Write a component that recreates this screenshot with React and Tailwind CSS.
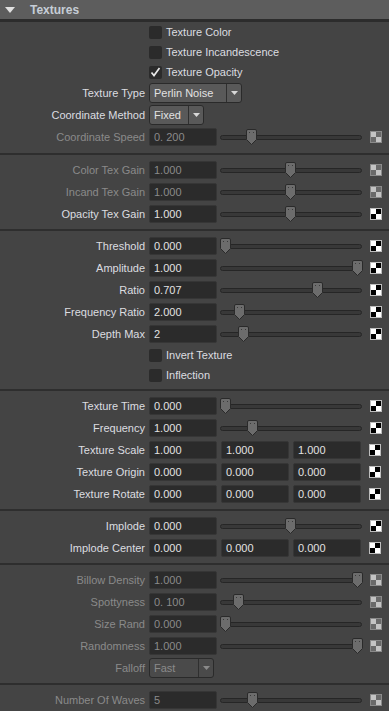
import React from 'react';

const font = { fontFamily: '"Liberation Sans", Arial, sans-serif' };

const groups = [
  [
    { type: 'check', label: 'Texture Color' },
    { type: 'check', label: 'Texture Incandescence' },
    { type: 'check', label: 'Texture Opacity', checked: true },
    { type: 'select', label: 'Texture Type', value: 'Perlin Noise', width: 'w-[93px]' },
    { type: 'select', label: 'Coordinate Method', value: 'Fixed', width: 'w-[55px]' },
    { type: 'slider', label: 'Coordinate Speed', value: '0. 200', pos: 251, disabled: true },
  ],
  [
    { type: 'slider', label: 'Color Tex Gain', value: '1.000', pos: 290, disabled: true },
    { type: 'slider', label: 'Incand Tex Gain', value: '1.000', pos: 290, disabled: true },
    { type: 'slider', label: 'Opacity Tex Gain', value: '1.000', pos: 290 },
  ],
  [
    { type: 'slider', label: 'Threshold', value: '0.000', pos: 225 },
    { type: 'slider', label: 'Amplitude', value: '1.000', pos: 357 },
    { type: 'slider', label: 'Ratio', value: '0.707', pos: 317 },
    { type: 'slider', label: 'Frequency Ratio', value: '2.000', pos: 239 },
    { type: 'slider', label: 'Depth Max', value: '2', pos: 243 },
    { type: 'check', label: 'Invert Texture' },
    { type: 'check', label: 'Inflection' },
  ],
  [
    { type: 'slider', label: 'Texture Time', value: '0.000', pos: 225 },
    { type: 'slider', label: 'Frequency', value: '1.000', pos: 252 },
    { type: 'triple', label: 'Texture Scale', values: ['1.000', '1.000', '1.000'] },
    { type: 'triple', label: 'Texture Origin', values: ['0.000', '0.000', '0.000'] },
    { type: 'triple', label: 'Texture Rotate', values: ['0.000', '0.000', '0.000'] },
  ],
  [
    { type: 'slider', label: 'Implode', value: '0.000', pos: 290 },
    { type: 'triple', label: 'Implode Center', values: ['0.000', '0.000', '0.000'] },
  ],
  [
    { type: 'slider', label: 'Billow Density', value: '1.000', pos: 357, disabled: true },
    { type: 'slider', label: 'Spottyness', value: '0. 100', pos: 238, disabled: true },
    { type: 'slider', label: 'Size Rand', value: '0.000', pos: 225, disabled: true },
    { type: 'slider', label: 'Randomness', value: '1.000', pos: 357, disabled: true },
    { type: 'select', label: 'Falloff', value: 'Fast', width: 'w-[65px]', disabled: true },
  ],
  [{ type: 'slider', label: 'Number Of Waves', value: '5', pos: 252, disabled: true }],
];

function Checker({ disabled }) {
  const light = disabled ? '#c4c4c4' : '#ffffff';
  const dark = disabled ? '#6a6a6a' : '#000000';
  return (
    <svg width="12" height="12" viewBox="0 0 12 12" className="ml-[8px] shrink-0">
      <rect x="0.5" y="0.5" width="11" height="11" fill={light} stroke={disabled ? '#8a8a8a' : '#bdbdbd'} />
      <rect x="6" y="1" width="5" height="5" fill={dark} />
      <rect x="1" y="6" width="5" height="5" fill={dark} />
    </svg>
  );
}

function Field({ value, disabled }) {
  return (
    <div
      className={`flex h-[18px] w-[68px] shrink-0 items-center rounded-[2px] border border-[#363636] bg-[#2b2b2b] pl-[4px] text-[11px] ${
        disabled ? 'text-[#8a8a8a]' : 'text-[#e2e2e2]'
      }`}
    >
      {value}
    </div>
  );
}

function Slider({ pos }) {
  return (
    <div className="relative ml-[3px] flex h-[18px] w-[142px] items-center">
      <div className="h-[5px] w-full rounded-full border border-[#262626] bg-[#383838]" />
      <svg
        width="11"
        height="16"
        viewBox="0 0 11 16"
        className="absolute top-[1px]"
        style={{ left: pos - 220 - 5 }}
      >
        <path d="M0.5 2 Q0.5 0.5 2 0.5 H9 Q10.5 0.5 10.5 2 V10.5 L5.5 15.5 L0.5 10.5 Z" fill="#6c6c6c" stroke="#2a2a2a" />
        <rect x="3" y="3" width="1" height="1" fill="#3a3a3a" />
        <rect x="7" y="3" width="1" height="1" fill="#3a3a3a" />
      </svg>
    </div>
  );
}

function Select({ value, width, disabled }) {
  return (
    <div
      className={`flex h-[20px] ${width} items-center rounded-[3px] border border-[#2a2a2a] ${
        disabled ? 'bg-[#4a4a4a] text-[#8a8a8a]' : 'bg-[#595959] text-[#e2e2e2]'
      } text-[11px]`}
    >
      <span className="flex-1 pl-[4px]">{value}</span>
      <span className="flex h-full w-[15px] items-center justify-center border-l border-[#2f2f2f]">
        <svg width="7" height="4" viewBox="0 0 7 4">
          <path d="M0 0 H7 L3.5 4 Z" fill={disabled ? '#8a8a8a' : '#d8d8d8'} />
        </svg>
      </span>
    </div>
  );
}

function Row({ row }) {
  if (row.type === 'check') {
    return (
      <div className="flex h-[20px] items-center pl-[149px]">
        <div className="flex h-[13px] w-[13px] items-center justify-center rounded-[2px] bg-[#2b2b2b]">
          {row.checked && (
            <svg width="11" height="10" viewBox="0 0 11 10">
              <path d="M1.5 5.5 L4 8.5 L9.5 1" fill="none" stroke="#e8e8e8" strokeWidth="1.7" />
            </svg>
          )}
        </div>
        <span className="ml-[4px] text-[11px] text-[#dcdde0]">{row.label}</span>
      </div>
    );
  }

  return (
    <div className="flex h-[22px] items-center">
      <div
        className={`w-[149px] shrink-0 pr-[4px] text-right text-[11px] ${
          row.disabled ? 'text-[#8a8a8a]' : 'text-[#dcdde0]'
        }`}
      >
        {row.label}
      </div>
      {row.type === 'select' && <Select value={row.value} width={row.width} disabled={row.disabled} />}
      {row.type === 'slider' && (
        <>
          <Field value={row.value} disabled={row.disabled} />
          <Slider pos={row.pos} />
          <Checker disabled={row.disabled} />
        </>
      )}
      {row.type === 'triple' && (
        <>
          <div className="flex gap-[4px]">
            {row.values.map((v, i) => (
              <Field key={i} value={v} />
            ))}
          </div>
          <Checker />
        </>
      )}
    </div>
  );
}

export default function App() {
  return (
    <div className="h-[711px] w-[389px] overflow-hidden bg-[#444444]" style={font}>
      <div className="flex h-[19px] items-center bg-[#5d5d5d]">
        <svg width="10" height="6" viewBox="0 0 10 6" className="ml-[5px]">
          <path d="M0 0 H10 L5 6 Z" fill="#e0e0e0" />
        </svg>
        <span className="ml-[15px] text-[12px] font-bold text-[#c6cdd6]">Textures</span>
      </div>
      <div className="h-[3px] bg-[#2c2c2c]" />
      {groups.map((rows, gi) => (
        <div key={gi}>
          {gi > 0 && <div className="h-[2px] bg-[#2e2e2e]" />}
          <div className={gi > 0 ? 'pt-[4px] pb-[4px]' : 'pb-[5px]'}>
            {rows.map((r, ri) => (
              <Row key={ri} row={r} />
            ))}
          </div>
        </div>
      ))}
    </div>
  );
}
